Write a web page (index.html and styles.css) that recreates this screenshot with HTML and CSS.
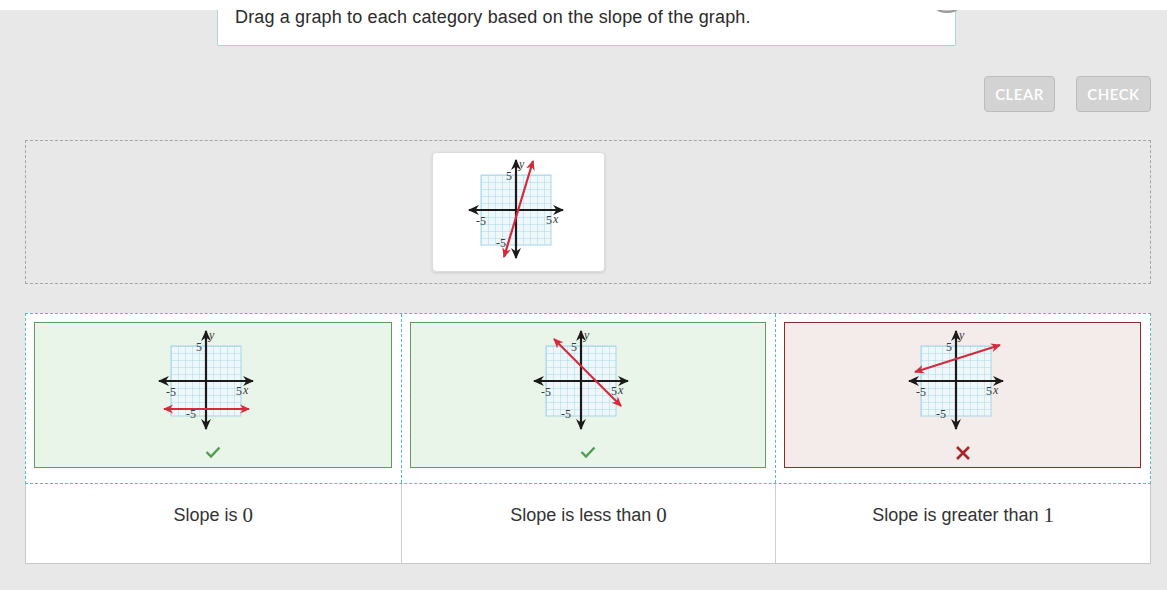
FILE: index.html
```html
<!DOCTYPE html>
<html>
<head>
<meta charset="utf-8">
<link rel="stylesheet" href="styles.css">
</head>
<body>
<svg class="defs" width="0" height="0">
  <defs>
    <marker id="ab" viewBox="0 0 10 10" refX="9" refY="5" markerWidth="11" markerHeight="11" markerUnits="userSpaceOnUse" orient="auto-start-reverse">
      <path d="M0,0.5 L10,5 L0,9.5 L3,5 z" fill="#1a1a1a"/>
    </marker>
    <marker id="ar" viewBox="0 0 10 10" refX="9" refY="5" markerWidth="10" markerHeight="10" markerUnits="userSpaceOnUse" orient="auto-start-reverse">
      <path d="M0,0.5 L10,5 L0,9.5 L3,5 z" fill="#d42a3c"/>
    </marker>
    <pattern id="grid" x="-35" y="-35" width="7" height="7" patternUnits="userSpaceOnUse">
      <path d="M7,0 L0,0 L0,7" fill="none" stroke="#9fd3e6" stroke-width="0.9"/>
    </pattern>
    <g id="axes">
      <rect x="-35" y="-35" width="70" height="70" fill="#eef8fb"/>
      <rect x="-35" y="-35" width="70" height="70" fill="url(#grid)"/>
      <rect x="-35" y="-35" width="70" height="70" fill="none" stroke="#9fd3e6" stroke-width="0.9"/>
      <line x1="-47" y1="0" x2="47" y2="0" stroke="#1a1a1a" stroke-width="2.2" marker-start="url(#ab)" marker-end="url(#ab)"/>
      <line x1="0" y1="-50" x2="0" y2="48" stroke="#1a1a1a" stroke-width="2.2" marker-start="url(#ab)" marker-end="url(#ab)"/>
      <text x="-4" y="-30" class="gn" text-anchor="end">5</text>
      <text x="3" y="-42" class="gv">y</text>
      <text x="-40" y="15" class="gn">-5</text>
      <text x="30" y="14" class="gn">5</text>
      <text x="37" y="13" class="gv">x</text>
      <text x="-20" y="37" class="gn">-5</text>
    </g>
  </defs>
</svg>

<div class="topbar"></div>

<div class="instructions">
  <p>Drag a graph to each category based on the slope of the graph.</p>
  <span class="corner"></span>
</div>

<main class="main">
  <div class="actions">
    <button class="btn">CLEAR</button>
    <button class="btn">CHECK</button>
  </div>

  <div class="pool">
    <div class="tile">
      <svg class="graph" width="114" height="106" viewBox="-50 -53 114 106">
        <use href="#axes"/>
        <line x1="-12" y1="47" x2="17" y2="-49" stroke="#d42a3c" stroke-width="2.2" marker-start="url(#ar)" marker-end="url(#ar)"/>
      </svg>
    </div>
  </div>

  <div class="cats">
    <div class="cat">
      <div class="drop ok">
        <svg class="graph" width="114" height="106" viewBox="-50 -53 114 106">
          <use href="#axes"/>
          <line x1="-42" y1="28" x2="43" y2="28" stroke="#d42a3c" stroke-width="2.2" marker-start="url(#ar)" marker-end="url(#ar)"/>
        </svg>
        <svg class="mark" width="16" height="12" viewBox="0 0 16 12"><path d="M1.5,6 L6,10.5 L14.5,1.5" fill="none" stroke="#4f9d4f" stroke-width="2.4"/></svg>
      </div>
    </div>
    <div class="cat">
      <div class="drop ok">
        <svg class="graph" width="114" height="106" viewBox="-50 -53 114 106">
          <use href="#axes"/>
          <line x1="-27" y1="-42" x2="40" y2="25" stroke="#d42a3c" stroke-width="2.2" marker-start="url(#ar)" marker-end="url(#ar)"/>
        </svg>
        <svg class="mark" width="16" height="12" viewBox="0 0 16 12"><path d="M1.5,6 L6,10.5 L14.5,1.5" fill="none" stroke="#4f9d4f" stroke-width="2.4"/></svg>
      </div>
    </div>
    <div class="cat">
      <div class="drop bad">
        <svg class="graph" width="114" height="106" viewBox="-50 -53 114 106">
          <use href="#axes"/>
          <line x1="-41" y1="-9" x2="44" y2="-36" stroke="#d42a3c" stroke-width="2.2" marker-start="url(#ar)" marker-end="url(#ar)"/>
        </svg>
        <svg class="mark" width="16" height="14" viewBox="0 0 16 14"><path d="M2,1 L14,13 M14,1 L2,13" fill="none" stroke="#a8262a" stroke-width="2.6"/></svg>
      </div>
    </div>
  </div>

  <div class="labels">
    <div class="label">Slope is <span class="num">0</span></div>
    <div class="label">Slope is less than <span class="num">0</span></div>
    <div class="label">Slope is greater than <span class="num">1</span></div>
  </div>
</main>
</body>
</html>
```

FILE: styles.css
```css
* { box-sizing: border-box; }

html, body {
  margin: 0;
  padding: 0;
}

body {
  background: #e8e8e8;
  font-family: "Liberation Sans", Arial, sans-serif;
  color: #333;
  width: 1167px;
  height: 590px;
  overflow: hidden;
  position: relative;
}

.defs {
  position: absolute;
  width: 0;
  height: 0;
  overflow: hidden;
}

.topbar {
  position: absolute;
  top: 0;
  left: 0;
  right: 0;
  height: 10px;
  background: #fff;
  z-index: 3;
}

.instructions {
  position: relative;
  margin-left: 217px;
  width: 739px;
  height: 46px;
  background: #fff;
  border: 1px solid #a9d5d6;
  border-top: none;
  border-radius: 0 0 2px 2px;
}

.instructions p {
  margin: 0;
  padding: 6px 0 0 17px;
  font-size: 18px;
  line-height: 22px;
  letter-spacing: 0.15px;
  color: #2b2b2b;
}

.corner {
  position: absolute;
  top: -27px;
  right: -12px;
  width: 40px;
  height: 40px;
  border-radius: 50%;
  background: #c9c9c9;
  border: 2px solid #9a9a9a;
  z-index: 1;
}

.main {
  margin-left: 25px;
  width: 1126px;
}

.actions {
  display: flex;
  justify-content: flex-end;
  gap: 21px;
  margin-top: 30px;
}

.btn {
  height: 36px;
  padding: 0 10px;
  background: #d3d3d3;
  border: 1px solid #bcbcbc;
  border-radius: 4px;
  color: #fff;
  font-family: Lato, "Open Sans", sans-serif;
  font-size: 15px;
  font-weight: 600;
  letter-spacing: 0.5px;
}

.btn:first-child { width: 71px; }
.btn:last-child { width: 75px; }

.pool {
  margin-top: 28px;
  border: 1px dashed #a4a4a4;
  padding: 11px 0 11px 406px;
  display: flex;
}

.tile {
  width: 173px;
  height: 120px;
  background: #fff;
  border: 1px solid #dcdcdc;
  border-radius: 4px;
  box-shadow: 0 1px 3px rgba(0, 0, 0, 0.12);
  display: flex;
  justify-content: center;
  padding: 4px 0 0 8px;
}

.graph { display: block; }

.gn {
  font-family: "Liberation Serif", "Times New Roman", serif;
  font-size: 12px;
  fill: #3a3a3a;
}

.gv {
  font-family: "Liberation Serif", "Times New Roman", serif;
  font-style: italic;
  font-size: 12px;
  fill: #3a3a3a;
}

.cats {
  margin-top: 29px;
  display: grid;
  grid-template-columns: repeat(3, 1fr);
  border: 1px dashed #55bcbd;
  background: #fff;
}

.cat {
  padding: 8px 9px 15px 8px;
}

.cat + .cat {
  border-left: 1px dashed #55bcbd;
}

.drop {
  height: 146px;
  border: 1px solid;
  display: flex;
  flex-direction: column;
  align-items: center;
  padding-top: 5px;
}

.drop.ok {
  background: #eaf5ea;
  border-color: #5f9d5f;
}

.drop.bad {
  background: #f4ebeb;
  border-color: #8e2b2b;
}

.mark {
  display: block;
  margin-top: 12px;
}

.labels {
  display: grid;
  grid-template-columns: repeat(3, 1fr);
  background: #fff;
  border: 1px solid #c9c9c9;
  border-top: none;
  height: 80px;
}

.label {
  display: flex;
  align-items: flex-start;
  justify-content: center;
  padding-top: 19px;
  font-size: 18px;
  line-height: 24px;
  color: #333;
  white-space: pre;
}

.label + .label {
  border-left: 1px solid #cfcfcf;
}

.num {
  font-family: "Liberation Serif", "Times New Roman", serif;
  font-size: 21px;
}
```
